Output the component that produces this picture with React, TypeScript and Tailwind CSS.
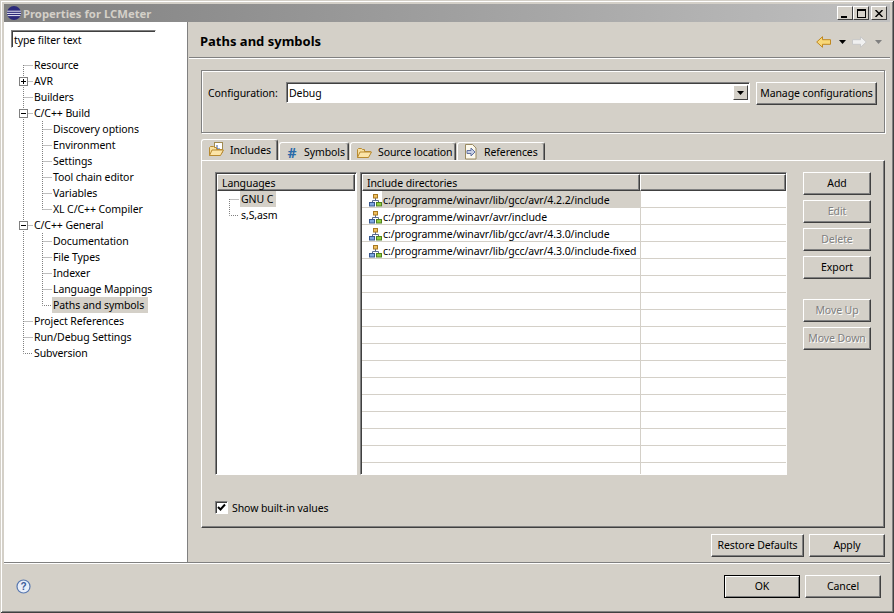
import React from "react";

const raised = "border border-t-white border-l-white border-r-[#404040] border-b-[#404040] shadow-[inset_-1px_-1px_0_#808080] bg-[#d4d0c8]";
const sunken = "border border-t-[#808080] border-l-[#808080] border-r-white border-b-white shadow-[inset_1px_1px_0_#404040]";

function Btn({ label, w, disabled, def }: { label: string; w: string; disabled?: boolean; def?: boolean }) {
  return (
    <div className={`${w} h-[23px] flex items-center justify-center whitespace-nowrap ${def ? "border border-black shadow-[inset_1px_1px_0_#fff,inset_-1px_-1px_0_#808080] bg-[#d4d0c8]" : raised} ${disabled ? "text-[#808080] [text-shadow:1px_1px_0_#fff]" : "text-black"}`}>
      {label}
    </div>
  );
}

function Eclipse() {
  return (
    <svg width="16" height="16" viewBox="0 0 16 16">
      <circle cx="8" cy="8" r="7" fill="#2c2a7a" />
      <path d="M1.2 6.2h13.6M1 8.4h14M1.6 10.6h12.8" stroke="#e8e8f4" strokeWidth="1" />
    </svg>
  );
}

function IncIcon() {
  return (
    <svg width="13" height="13" viewBox="0 0 13 13" className="shrink-0 block">
      <path d="M3.5 9V6.5h6V9M6.5 4v2.5" stroke="#5a6a90" fill="none" />
      <rect x="4.5" y="0.5" width="4" height="3.5" fill="#f0c060" stroke="#a87820" />
      <rect x="0.5" y="8.5" width="5" height="3.5" fill="#80a8e0" stroke="#385890" />
      <rect x="7.5" y="8.5" width="5" height="3.5" fill="#90d040" stroke="#508020" />
    </svg>
  );
}

function FolderIcon({ doc }: { doc?: boolean }) {
  return (
    <svg width="16" height="16" viewBox="0 0 16 16" className="shrink-0">
      {doc && <rect x="5.5" y="0.5" width="8" height="10" fill="#fff" stroke="#a08a50" />}
      {doc && <path d="M8 3v4h3" stroke="#3a5aa0" fill="none" />}
      <path d="M0.5 13.5V5.5l1-1h3l1 1h2v2h6l-2.5 6z" fill="#f8e0a0" stroke="#b88a30" />
      <path d="M3 8h11.5l-3 5.5h-11z" fill="#fbe4a8" stroke="#b88a30" />
    </svg>
  );
}

function RefIcon() {
  return (
    <svg width="16" height="16" viewBox="0 0 16 16" className="shrink-0">
      <path d="M2.5 0.5h7l3.5 3.5v11h-10.5z" fill="#fbf8ec" stroke="#9a8a60" />
      <path d="M4 6.5h4V4l4 4-4 4V9.5H4z" fill="#c8d0e4" stroke="#6070a0" />
    </svg>
  );
}

function Arrow({ color, stroke, flip }: { color: string; stroke: string; flip?: boolean }) {
  return (
    <svg width="15" height="12" viewBox="0 0 15 12" className={flip ? "-scale-x-100" : ""}>
      <path d="M0.7 6L6.5 0.7v3h8v4.6h-8v3z" fill={color} stroke={stroke} />
    </svg>
  );
}

function Caret({ color }: { color: string }) {
  return (
    <svg width="7" height="4" viewBox="0 0 7 4" className="block">
      <path d="M0 0h7L3.5 4z" fill={color} />
    </svg>
  );
}

function ExpBox({ open }: { open: boolean }) {
  return (
    <svg width="9" height="9" viewBox="0 0 9 9" className="absolute left-[15px] top-[4px]">
      <rect x="0.5" y="0.5" width="8" height="8" fill="#fff" stroke="#808080" />
      <path d={open ? "M2 4.5h5" : "M2 4.5h5M4.5 2v5"} stroke="#000" />
    </svg>
  );
}

const tree: { t: string; lvl: 0 | 1; box?: "open" | "closed"; sel?: boolean }[] = [
  { t: "Resource", lvl: 0 },
  { t: "AVR", lvl: 0, box: "closed" },
  { t: "Builders", lvl: 0 },
  { t: "C/C++ Build", lvl: 0, box: "open" },
  { t: "Discovery options", lvl: 1 },
  { t: "Environment", lvl: 1 },
  { t: "Settings", lvl: 1 },
  { t: "Tool chain editor", lvl: 1 },
  { t: "Variables", lvl: 1 },
  { t: "XL C/C++ Compiler", lvl: 1 },
  { t: "C/C++ General", lvl: 0, box: "open" },
  { t: "Documentation", lvl: 1 },
  { t: "File Types", lvl: 1 },
  { t: "Indexer", lvl: 1 },
  { t: "Language Mappings", lvl: 1 },
  { t: "Paths and symbols", lvl: 1, sel: true },
  { t: "Project References", lvl: 0 },
  { t: "Run/Debug Settings", lvl: 0 },
  { t: "Subversion", lvl: 0 },
];

const dirs = [
  "c:/programme/winavr/lib/gcc/avr/4.2.2/include",
  "c:/programme/winavr/avr/include",
  "c:/programme/winavr/lib/gcc/avr/4.3.0/include",
  "c:/programme/winavr/lib/gcc/avr/4.3.0/include-fixed",
];

function Header({ label, w }: { label: string; w: string }) {
  return <div className={`${w} h-[17px] pl-[4px] pt-[2px] flex items-center shrink-0 ${raised}`}>{label}</div>;
}

function Tab({ label, icon, w, active }: { label: string; icon: React.ReactNode; w: string; active?: boolean }) {
  return (
    <div className={`${w} ${active ? "h-[21px] pl-[7px]" : "h-[18px] pl-[5px] pt-[1px]"} gap-[5px] relative flex items-center whitespace-nowrap rounded-t-[3px] border-t border-l border-r border-t-white border-l-white border-r-[#404040] shadow-[inset_-1px_0_0_#808080] shrink-0`}>
      {icon}
      <span className={active ? "" : "pt-[1px]"}>{label}</span>
    </div>
  );
}

export default function App() {
  return (
    <div
      className="w-[894px] h-[613px] bg-[#d4d0c8] p-[4px] flex flex-col overflow-hidden text-black text-[10.5px] tracking-[-0.09px] leading-[13px] shadow-[inset_1px_1px_0_#d4d0c8,inset_-1px_-1px_0_#404040,inset_2px_2px_0_#fff,inset_-2px_-2px_0_#808080]"
      style={{ fontFamily: '"Noto Sans", Tahoma, sans-serif' }}
    >
      {/* Title bar */}
      <div className="h-[18px] shrink-0 flex items-center pl-[2px] pr-[3px] bg-gradient-to-r from-[#808080] to-[#c0c0c0]">
        <Eclipse />
        <span className="ml-[1px] font-bold text-[#d4d0c8] text-[11.3px] tracking-normal">Properties for LCMeter</span>
        <div className="ml-auto flex">
          {["min", "max"].map((k) => (
            <div key={k} className="w-[16px] h-[14px] flex items-center justify-center border border-t-white border-l-white border-r-[#404040] border-b-[#404040] bg-[#d4d0c8]">
              {k === "min" ? <div className="w-[6px] h-[2px] bg-black mt-[7px] mr-[2px]" /> : <div className="w-[9px] h-[9px] border border-black border-t-2" />}
            </div>
          ))}
          <div className="ml-[2px] w-[16px] h-[14px] flex items-center justify-center border border-t-white border-l-white border-r-[#404040] border-b-[#404040] bg-[#d4d0c8]">
            <svg width="8" height="7" viewBox="0 0 8 7"><path d="M0.5 0L7.5 7M7.5 0L0.5 7" stroke="#000" strokeWidth="1.5" /></svg>
          </div>
        </div>
      </div>

      {/* Main */}
      <div className="flex-1 flex min-h-0">
        {/* Left */}
        <div className="w-[183px] shrink-0 bg-white relative pt-[8px] pl-[7px]">
          <div className={`w-[145px] h-[18px] pl-[2px] pt-[2px] flex items-center bg-white ${sunken}`}>type filter text</div>
          <div className="mt-[9px] -ml-[7px] relative">
            <svg width="60" height="310" className="absolute left-0 top-0" fill="none" stroke="#808080" strokeDasharray="1 1">
              <path d="M19.5 8V296.5H29" />
              <path d="M38.5 64V152.5M38.5 176V248.5H48" />
              <path d="M19.5 8.5H29M19.5 24.5H29M19.5 40.5H29M19.5 56.5H29M19.5 168.5H29M19.5 264.5H29M19.5 280.5H29" />
              <path d="M38.5 72.5H48M38.5 88.5H48M38.5 104.5H48M38.5 120.5H48M38.5 136.5H48M38.5 152.5H48M38.5 184.5H48M38.5 200.5H48M38.5 216.5H48M38.5 232.5H48" />
            </svg>
            {tree.map((r) => (
              <div key={r.t} className={`h-[16px] relative flex items-center ${r.lvl === 0 ? "pl-[29px]" : "pl-[48px]"}`}>
                {r.box && <ExpBox open={r.box === "open"} />}
                <span className={`pl-[1px] pr-[4px] h-[16px] flex items-center relative ${r.sel ? "bg-[#d4d0c8]" : ""}`}>{r.t}</span>
              </div>
            ))}
          </div>
        </div>
        <div className="w-[2px] shrink-0 bg-[#d4d0c8] border-l border-[#808080]" />

        {/* Right */}
        <div className="flex-1 min-w-0 flex flex-col">
          <div className="h-[35px] shrink-0 flex items-center pl-[11px] pr-[8px] pt-[4px]">
            <span className="font-bold text-[13px] tracking-normal">Paths and symbols</span>
            <div className="ml-auto flex items-center">
              <Arrow color="#f8d878" stroke="#c08820" />
              <div className="ml-[8px]"><Caret color="#000" /></div>
              <div className="ml-[6px]"><Arrow color="#f0f0f0" stroke="#c8c8c8" flip /></div>
              <div className="ml-[8px]"><Caret color="#808080" /></div>
            </div>
          </div>
          <div className="h-[2px] shrink-0 border-t border-t-[#808080] bg-white" />

          <div className="flex-1 min-h-0 pl-[12px] pr-[5px] pt-[11px] flex flex-col">
            {/* Config group */}
            <div className="h-[63px] w-[684px] shrink-0 border border-[#808080] shadow-[inset_1px_1px_0_#fff,1px_1px_0_#fff] flex items-start pl-[6px] pt-[11px]">
              <span className="w-[78px] h-[21px] pt-[2px] flex items-center">Configuration:</span>
              <div className={`w-[464px] h-[21px] bg-white flex items-center pl-[2px] pr-[1px] ${sunken}`}>
                <span className="pt-[2px]">Debug</span>
                <div className="ml-auto w-[15px] h-[15px] flex items-center justify-center border border-t-white border-l-white border-r-[#404040] border-b-[#404040] bg-[#d4d0c8]"><Caret color="#000" /></div>
              </div>
              <div className="ml-[6px]"><Btn label="Manage configurations" w="w-[121px]" /></div>
            </div>

            {/* Tabs */}
            <div className="flex items-end mt-[6px] h-[21px] shrink-0 gap-[1px]">
              <Tab active label="Includes" w="w-[77px]" icon={<FolderIcon doc />} />
              <Tab label="Symbols" w="w-[70px]" icon={<span className="w-[14px] text-center font-bold text-[14px] text-[#2a6aa8]">#</span>} />
              <Tab label="Source location" w="w-[106px]" icon={<span className="ml-[1px] flex"><FolderIcon /></span>} />
              <Tab label="References" w="w-[88px]" icon={<RefIcon />} />
            </div>

            {/* Panel */}
            <div className="h-[368px] w-[684px] shrink-0 border border-t-white border-l-white border-r-[#404040] border-b-[#404040] shadow-[inset_-1px_-1px_0_#808080] pl-[13px] pt-[11px]">
              <div className="flex items-start">
                {/* Languages */}
                <div className={`w-[142px] h-[303px] bg-white flex flex-col ${sunken} pt-[1px] pl-[1px]`}>
                  <Header label="Languages" w="w-[138px]" />
                  <div className="relative pl-[23px]">
                    <svg width="14" height="32" className="absolute left-[11px] top-0" fill="none" stroke="#808080" strokeDasharray="1 1">
                      <path d="M1.5 8V24.5H11M1.5 8.5H11" />
                    </svg>
                    <div className="h-[16px] w-fit pl-[1px] pr-[3px] bg-[#d4d0c8] pt-[1px] flex items-center">GNU C</div>
                    <div className="h-[16px] px-[1px] pt-[1px] flex items-center">s,S,asm</div>
                  </div>
                </div>
                {/* Includes table */}
                <div className={`ml-[3px] w-[427px] h-[303px] bg-white flex flex-col overflow-hidden ${sunken} pt-[1px] pl-[1px]`}>
                  <div className="flex shrink-0">
                    <Header label="Include directories" w="w-[278px]" />
                    <Header label="" w="w-[146px]" />
                  </div>
                  <div className="flex-1 overflow-hidden">
                    {Array.from({ length: 17 }).map((_, i) => (
                      <div key={i} className="h-[17px] flex border-b border-[#d4d0c8]">
                        <div className="w-[279px] shrink-0 flex items-center border-r border-[#d4d0c8]">
                          <div className="w-[20px] shrink-0 pl-[7px] pt-[2px]">{dirs[i] && <IncIcon />}</div>
                          {dirs[i] && <span className={`flex-1 h-full pl-[1px] pt-[2px] flex items-center whitespace-nowrap ${i === 0 ? "bg-[#d4d0c8]" : ""}`}>{dirs[i]}</span>}
                        </div>
                      </div>
                    ))}
                  </div>
                </div>
                {/* Side buttons */}
                <div className="ml-[16px] flex flex-col gap-[5px]">
                  <Btn label="Add" w="w-[68px]" />
                  <Btn label="Edit" w="w-[68px]" disabled />
                  <Btn label="Delete" w="w-[68px]" disabled />
                  <Btn label="Export" w="w-[68px]" />
                  <div className="h-[10px]" />
                  <Btn label="Move Up" w="w-[68px]" disabled />
                  <Btn label="Move Down" w="w-[68px]" disabled />
                </div>
              </div>
              <div className="mt-[25px] flex items-center">
                <div className={`w-[13px] h-[13px] bg-white flex items-center justify-center ${sunken}`}>
                  <svg width="9" height="9" viewBox="0 0 9 9"><path d="M1 4l2.5 2.5L8 1.5" stroke="#000" strokeWidth="2" fill="none" /></svg>
                </div>
                <span className="ml-[4px] pt-[2px]">Show built-in values</span>
              </div>
            </div>

            {/* Restore / Apply */}
            <div className="mt-[6px] flex justify-end gap-[5px]">
              <Btn label="Restore Defaults" w="w-[93px]" />
              <Btn label="Apply" w="w-[76px]" />
            </div>
          </div>
        </div>
      </div>

      {/* Bottom */}
      <div className="h-[2px] shrink-0 border-t border-t-[#808080] bg-white" />
      <div className="h-[45px] shrink-0 flex items-start pt-[11px] pl-[12px] pr-[9px]">
        <svg width="15" height="15" viewBox="0 0 15 15" className="mt-[4px]">
          <circle cx="7.5" cy="7.5" r="6.5" fill="#e8eef8" stroke="#5878b0" strokeWidth="1.2" />
          <text x="7.5" y="11" textAnchor="middle" fontSize="10" fontWeight="700" fill="#3a5a98" fontFamily="Liberation Sans">?</text>
        </svg>
        <div className="ml-auto flex gap-[5px]">
          <Btn label="OK" w="w-[76px]" def />
          <Btn label="Cancel" w="w-[76px]" />
        </div>
      </div>
    </div>
  );
}
